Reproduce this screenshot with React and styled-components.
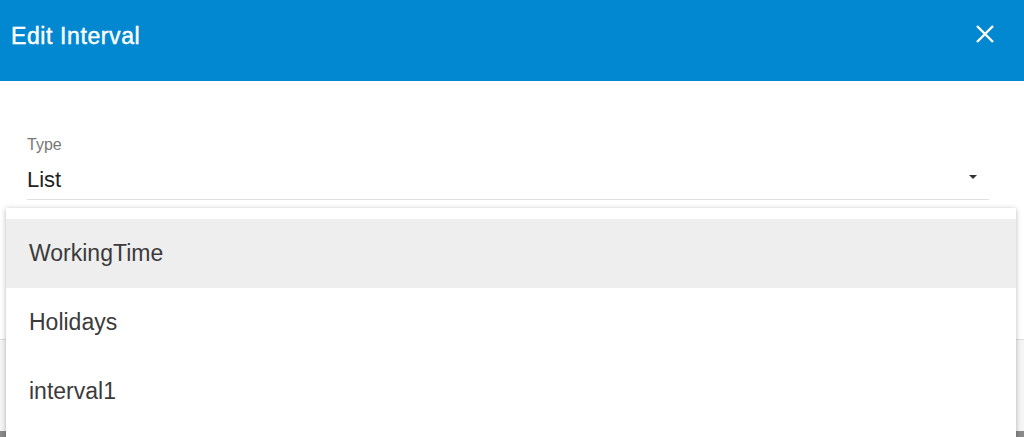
import React from "react";
import styled, { createGlobalStyle } from "styled-components";

const Global = createGlobalStyle`
  html, body { margin: 0; padding: 0; background: #ffffff; }
  body { font-family: "Liberation Sans", Arial, sans-serif; overflow: hidden; }
`;

const Page = styled.div`
  position: relative;
  width: 1024px;
  height: 437px;
  overflow: hidden;
  display: flex;
  flex-direction: column;
  background: #ffffff;
`;

const Header = styled.header`
  height: 81px;
  flex: none;
  background: #0288d1;
  display: flex;
  align-items: center;
  justify-content: space-between;
  padding: 0 30px 0 11px;
  box-sizing: border-box;
`;

const Title = styled.h1`
  margin: 0;
  color: #ffffff;
  font-family: "Liberation Sans", Arial, sans-serif;
  font-size: 23px;
  font-weight: 400;
  letter-spacing: 0.6px;
  -webkit-text-stroke: 0.45px #ffffff;
  margin-top: -9px;
`;

const CloseButton = styled.button`
  border: 0;
  background: transparent;
  padding: 0;
  width: 18px;
  height: 18px;
  display: flex;
  margin-top: -13px;
  cursor: pointer;
`;

const Content = styled.div`
  height: 258px;
  flex: none;
  box-sizing: border-box;
  padding: 54px 35px 0 27px;
`;

const Field = styled.div`
  display: flex;
  flex-direction: column;
  border-bottom: 1px solid #e0e0e0;
`;

const Label = styled.label`
  font-size: 16px;
  line-height: 20px;
  color: #777777;
`;

const SelectRow = styled.div`
  display: flex;
  align-items: center;
  justify-content: space-between;
  height: 44px;
  padding-right: 12px;
`;

const Value = styled.span`
  font-size: 22px;
  color: #222222;
  margin-top: 6px;
`;

const Caret = styled.span`
  width: 0;
  height: 0;
  border-left: 4px solid transparent;
  border-right: 4px solid transparent;
  border-top: 4px solid #333333;
  margin-top: 0px;
`;

const Footer = styled.div`
  flex: 1;
  border-top: 1px solid #dddddd;
  background: #f5f5f5;
  display: flex;
  flex-direction: column;
  justify-content: flex-end;
`;

const FooterBar = styled.div`
  height: 6px;
  background: #8a8a8a;
`;

const Menu = styled.ul`
  position: absolute;
  top: 208px;
  left: 6px;
  width: 1010px;
  margin: 0;
  padding: 11px 0 0;
  list-style: none;
  background: #ffffff;
  box-shadow: 0 1px 6px rgba(0, 0, 0, 0.18), 0 1px 4px rgba(0, 0, 0, 0.12);
  height: 260px;
`;

const Item = styled.li`
  height: 69px;
  display: flex;
  align-items: center;
  padding-left: 23px;
  font-size: 23px;
  color: #3b3b3b;
  background: ${(p) => (p.$active ? "#eeeeee" : "#ffffff")};
`;

const items = ["WorkingTime", "Holidays", "interval1"];

export default function App() {
  return (
    <>
      <Global />
      <Page>
        <Header>
          <Title>Edit Interval</Title>
          <CloseButton aria-label="Close">
            <svg width="18" height="18" viewBox="0 0 18 18">
              <path d="M1 1 L17 17 M17 1 L1 17" stroke="#ffffff" strokeWidth="2.4" fill="none" />
            </svg>
          </CloseButton>
        </Header>
        <Content>
          <Field>
            <Label>Type</Label>
            <SelectRow>
              <Value>List</Value>
              <Caret />
            </SelectRow>
          </Field>
        </Content>
        <Footer>
          <FooterBar />
        </Footer>
        <Menu>
          {items.map((it, i) => (
            <Item key={it} $active={i === 0}>
              {it}
            </Item>
          ))}
        </Menu>
      </Page>
    </>
  );
}
